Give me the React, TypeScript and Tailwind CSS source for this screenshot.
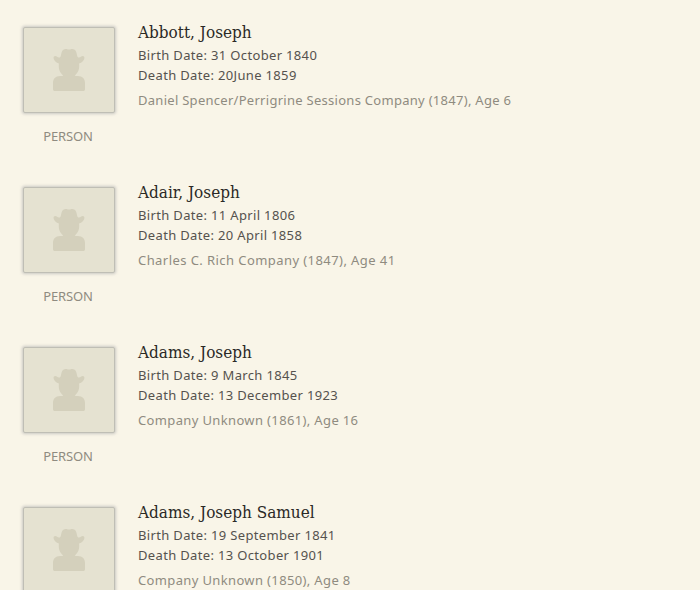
const people = [
  { name: 'Abbott, Joseph', birth: '31 October 1840', death: '20June 1859', company: 'Daniel Spencer/Perrigrine Sessions Company (1847), Age 6', label: 'PERSON', tracking: 'tracking-[0.28px]' },
  { name: 'Adair, Joseph', birth: '11 April 1806', death: '20 April 1858', company: 'Charles C. Rich Company (1847), Age 41', label: 'PERSON', tracking: 'tracking-[0.43px]' },
  { name: 'Adams, Joseph', birth: '9 March 1845', death: '13 December 1923', company: 'Company Unknown (1861), Age 16', label: 'PERSON', tracking: 'tracking-[0.36px]' },
  { name: 'Adams, Joseph Samuel', birth: '19 September 1841', death: '13 October 1901', company: 'Company Unknown (1850), Age 8', tracking: 'tracking-[0.36px]' },
];

function PioneerIcon() {
  return (
    <svg width="32" height="42" viewBox="0 0 32 42" fill="#d4d0bc" aria-hidden="true">
      <path d="M8 6C8.600 2 9.800 0 12.500 0c1.500 0 2 .6 3.500.6S18 0 19.500 0C22.200 0 23.400 2 24 6c.3 1.800.9 2.600 2 2.600 1.600 0 2.200-1.600 3.700-1.600 1.300 0 2 1 1.700 2.300-.5 2.500-2.500 4.500-5.300 5.200.6 5.800-1 9.400-4.400 11.900.7.500 1.700.6 3.100.6C29.700 27.200 32 30 32 34v6c0 1.400-.6 2-2 2H2c-1.400 0-2-.6-2-2v-6c0-4 2.300-6.800 7.200-7 1.400 0 2.400-.1 3.100-.6C6.900 23.900 5.300 20.300 5.900 14.500 3.100 13.800 1.100 11.800.6 9.300.3 8 1 7 2.300 7 3.800 7 4.400 8.600 6 8.600c1.100 0 1.700-.8 2-2.600Z" />
    </svg>
  );
}

export default function App() {
  return (
    <main className="h-[590px] w-[700px] overflow-hidden bg-[#f9f5e8] pl-[23px] pt-[27px] font-['Noto_Sans',sans-serif] text-[13px]">
      {people.map((person) => (
        <article key={person.name} className="flex h-40 gap-[23px]">
          <div className="flex w-[92px] shrink-0 flex-col items-center">
            <div className="flex h-[86px] w-[92px] items-start justify-center rounded-[2px] border border-[#bfbeb5] bg-[#e5e2d1] pt-[21px] shadow-[0_0_3px_1px_#aaaaaa99]">
              <PioneerIcon />
            </div>
            {person.label && (
              <div className="mr-[2px] mt-[13px] whitespace-nowrap leading-5 tracking-[-0.1px] text-[#8f8b80]">{person.label}</div>
            )}
          </div>
          <div className="-mt-[7px] whitespace-nowrap leading-5 tracking-[0.34px] text-[#55524e]">
            <h2 className="h-[25px] font-['DejaVu_Serif_Condensed','DejaVu_Serif',serif] text-[17px] font-normal leading-[25px] tracking-normal text-[#2b2926]">{person.name}</h2>
            <p>Birth Date: {person.birth}</p>
            <p>Death Date: {person.death}</p>
            <p className={`mt-[5px] text-[#8f8b80] ${person.tracking}`}>{person.company}</p>
          </div>
        </article>
      ))}
    </main>
  );
}
